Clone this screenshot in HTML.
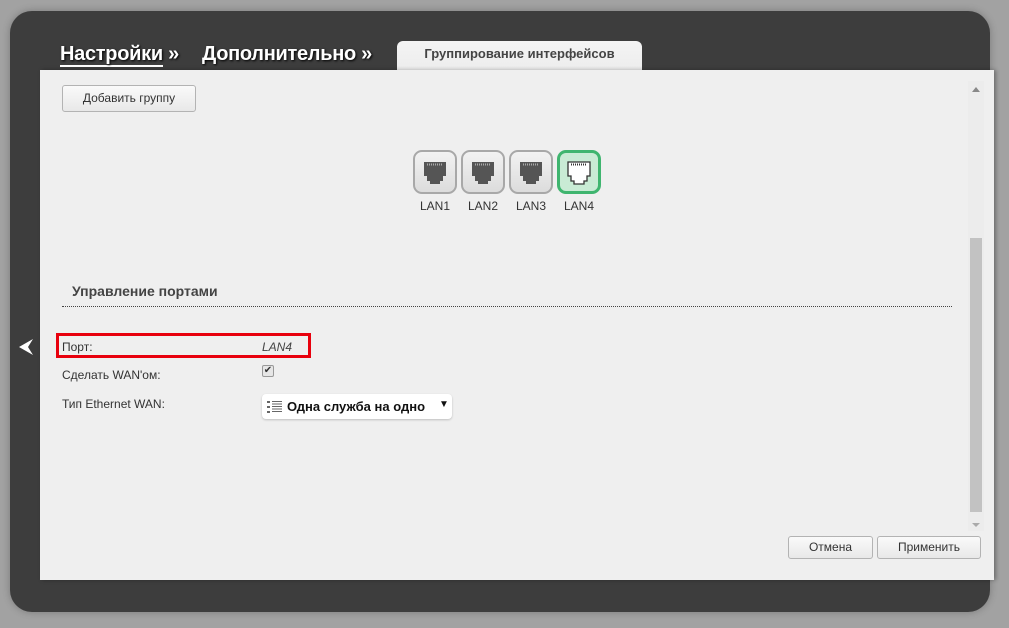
<!DOCTYPE html>
<html><head><meta charset="utf-8">
<style>
*{margin:0;padding:0;box-sizing:border-box}
body{width:1009px;height:628px;background:#a2a2a2;font-family:"Liberation Sans",Arial,sans-serif;position:relative;overflow:hidden}
.frame{position:absolute;left:10px;top:11px;width:980px;height:601px;background:#3d3d3d;border-radius:22px;box-shadow:0 0 8px rgba(0,0,0,.25)}
.crumb{position:absolute;top:43px;font-size:20px;font-weight:bold;color:#fff;text-shadow:1px 1px 2px #000;letter-spacing:-0.3px}
.tab{position:absolute;left:397px;top:41px;width:245px;height:32px;background:linear-gradient(#f4f4f4,#ececec);border-radius:6px 6px 0 0;font-size:13px;font-weight:bold;color:#444;text-align:center;line-height:26px}
.panel{position:absolute;left:40px;top:70px;width:954px;height:510px;background:#efefef;box-shadow:2px 0 4px rgba(0,0,0,.3)}
.btn{position:absolute;background:linear-gradient(#fafafa,#e8e8e8);border:1px solid #b3b3b3;border-radius:3px;font-size:12px;color:#333;text-align:center}
.port{position:absolute;top:150px;width:44px;height:44px;border:2px solid #a8a8a8;border-radius:9px;background:linear-gradient(#f2f2f2,#dcdcdc)}
.port.on{border:3px solid #3fb56f;background:#c9ebd5}
.pl{position:absolute;top:199px;font-size:12px;color:#333;width:44px;text-align:center}
.lbl{position:absolute;font-size:12px;color:#333}
</style></head><body>
<div class="frame"></div>
<div class="crumb" style="left:60px"><span style="border-bottom:2px solid #fff">Настройки</span> »</div>
<div class="crumb" style="left:202px">Дополнительно »</div>
<div class="tab">Группирование интерфейсов</div>
<div class="panel"></div>
<div class="btn" style="left:62px;top:85px;width:134px;height:27px;line-height:25px">Добавить группу</div>

<div class="port" style="left:413px"><svg width="40" height="40" viewBox="0 0 40 40"><path d="M9 10h22v14h-3v5h-3v3h-10v-3h-3v-5h-3z" fill="#555"/><path d="M12 12.5h16" stroke="#aaa" stroke-width="2" stroke-dasharray="1 1"/></svg></div>
<div class="port" style="left:461px"><svg width="40" height="40" viewBox="0 0 40 40"><path d="M9 10h22v14h-3v5h-3v3h-10v-3h-3v-5h-3z" fill="#555"/><path d="M12 12.5h16" stroke="#aaa" stroke-width="2" stroke-dasharray="1 1"/></svg></div>
<div class="port" style="left:509px"><svg width="40" height="40" viewBox="0 0 40 40"><path d="M9 10h22v14h-3v5h-3v3h-10v-3h-3v-5h-3z" fill="#555"/><path d="M12 12.5h16" stroke="#aaa" stroke-width="2" stroke-dasharray="1 1"/></svg></div>
<div class="port on" style="left:557px"><svg width="38" height="38" viewBox="0 0 38 38"><path d="M8 9h22v14h-3v5h-3v3h-10v-3h-3v-5h-3z" fill="#fff" stroke="#333" stroke-width="1.3"/><path d="M11 11.5h16" stroke="#333" stroke-width="2" stroke-dasharray="1 1"/></svg></div>
<div class="pl" style="left:413px">LAN1</div>
<div class="pl" style="left:461px">LAN2</div>
<div class="pl" style="left:509px">LAN3</div>
<div class="pl" style="left:557px">LAN4</div>

<div style="position:absolute;left:72px;top:283px;font-size:14px;font-weight:bold;color:#444">Управление портами</div>
<div style="position:absolute;left:62px;top:306px;width:890px;border-top:1px dotted #444"></div>

<svg style="position:absolute;left:17px;top:338px" width="18" height="18" viewBox="0 0 18 18"><path d="M16 1L2 9l14 8-5-8z" fill="#fff"/></svg>
<div style="position:absolute;left:56px;top:333px;width:255px;height:25px;border:3px solid #e8000d"></div>
<div class="lbl" style="left:62px;top:340px">Порт:</div>
<div class="lbl" style="left:262px;top:340px;font-style:italic;color:#444">LAN4</div>
<div class="lbl" style="left:62px;top:368px">Сделать WAN'ом:</div>
<div style="position:absolute;left:262px;top:365px;width:12px;height:12px;border:1px solid #999;border-radius:2px;background:#e6e6e6;font-size:10px;line-height:10px;text-align:center;color:#333">✔</div>
<div class="lbl" style="left:62px;top:397px">Тип Ethernet WAN:</div>
<div style="position:absolute;left:262px;top:394px;width:190px;height:25px;background:#fff;border-radius:4px;box-shadow:0 1px 2px rgba(0,0,0,.2)">
<svg style="position:absolute;left:5px;top:6px" width="16" height="14" viewBox="0 0 16 14"><g fill="#666"><rect x="0" y="1" width="3" height="2"/><rect x="0" y="6" width="3" height="2"/><rect x="0" y="11" width="3" height="2"/><rect x="5" y="1" width="10" height="1"/><rect x="5" y="3.5" width="10" height="1"/><rect x="5" y="6" width="10" height="1"/><rect x="5" y="8.5" width="10" height="1"/><rect x="5" y="11" width="10" height="1"/></g></svg>
<span style="position:absolute;left:25px;top:5px;font-size:13px;font-weight:bold;color:#111">Одна служба на одно</span>
<span style="position:absolute;left:177px;top:5px;font-size:10px;color:#111">▼</span></div>

<div style="position:absolute;left:968px;top:81px;width:16px;height:450px;background:#ececec"></div>
<div style="position:absolute;left:970px;top:238px;width:12px;height:274px;background:#c2c2c2"></div>
<div style="position:absolute;left:972px;top:87px;width:0;height:0;border-left:4px solid transparent;border-right:4px solid transparent;border-bottom:5px solid #888"></div>
<div style="position:absolute;left:972px;top:523px;width:0;height:0;border-left:4px solid transparent;border-right:4px solid transparent;border-top:4px solid #aaa"></div>

<div class="btn" style="left:788px;top:536px;width:85px;height:23px;line-height:21px">Отмена</div>
<div class="btn" style="left:877px;top:536px;width:104px;height:23px;line-height:21px">Применить</div>
</body></html>
